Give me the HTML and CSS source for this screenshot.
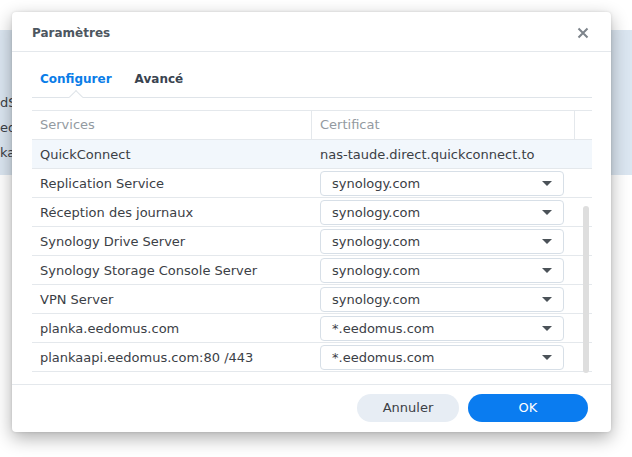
FILE: index.html
```html
<!DOCTYPE html>
<html lang="fr">
<head>
<meta charset="utf-8">
<title>Paramètres</title>
<link rel="stylesheet" href="styles.css">
</head>
<body>
<div class="desktop">
  <div class="backdrop">
    <div class="bd-top"></div>
    <div class="bd-band">
      <div class="bd-rows">
        <div class="bd-row">dS</div>
        <div class="bd-row">ed</div>
        <div class="bd-row">ka</div>
      </div>
    </div>
  </div>

  <div class="dialog">
    <div class="dlg-header">
      <span class="dlg-title">Paramètres</span>
      <span class="dlg-close" aria-label="Fermer">
        <svg width="12" height="12" viewBox="0 0 12 12"><path d="M1.5 1.5L10.5 10.5M10.5 1.5L1.5 10.5" stroke="#7d848b" stroke-width="2" stroke-linecap="butt"/></svg>
      </span>
    </div>
    <div class="dlg-body">
      <div class="tabs">
        <span class="tab active">Configurer</span>
        <span class="tab">Avancé</span>
      </div>
      <div class="table">
        <div class="thead">
          <div class="th th-svc">Services</div>
          <div class="th th-cert">Certificat</div>
          <div class="th th-pad"></div>
        </div>
        <div class="tbody">
          <div class="row selected"><div class="td">QuickConnect</div><div class="td cert-text">nas-taude.direct.quickconnect.to</div></div>
          <div class="row"><div class="td">Replication Service</div><div class="td"><div class="select">synology.com<i class="caret"></i></div></div></div>
          <div class="row"><div class="td">Réception des journaux</div><div class="td"><div class="select">synology.com<i class="caret"></i></div></div></div>
          <div class="row"><div class="td">Synology Drive Server</div><div class="td"><div class="select">synology.com<i class="caret"></i></div></div></div>
          <div class="row"><div class="td">Synology Storage Console Server</div><div class="td"><div class="select">synology.com<i class="caret"></i></div></div></div>
          <div class="row"><div class="td">VPN Server</div><div class="td"><div class="select">synology.com<i class="caret"></i></div></div></div>
          <div class="row"><div class="td">planka.eedomus.com</div><div class="td"><div class="select">*.eedomus.com<i class="caret"></i></div></div></div>
          <div class="row"><div class="td">plankaapi.eedomus.com:80 /443</div><div class="td"><div class="select">*.eedomus.com<i class="caret"></i></div></div></div>
          <div class="scroll-thumb"></div>
        </div>
      </div>
    </div>
    <div class="dlg-footer">
      <button class="btn btn-cancel">Annuler</button>
      <button class="btn btn-ok">OK</button>
    </div>
  </div>
</div>
</body>
</html>
```
FILE: styles.css
```css
* { box-sizing: border-box; }
html, body { margin: 0; padding: 0; }
body {
  width: 632px;
  height: 457px;
  overflow: hidden;
  background: #ffffff;
  font-family: "DejaVu Sans", Verdana, sans-serif;
  font-size: 13px;
  color: #3b4046;
}
.desktop {
  position: relative;
  width: 632px;
  height: 457px;
}
.backdrop {
  display: flex;
  flex-direction: column;
}
.bd-top { height: 30px; background: #ffffff; }
.bd-band {
  height: 145px;
  background: #dbe6f1;
}
.bd-rows {
  padding-top: 60px;
  display: flex;
  flex-direction: column;
}
.bd-row {
  height: 25px;
  line-height: 25px;
  color: #3b4046;
}

.dialog {
  position: absolute;
  left: 12px;
  top: 12px;
  width: 599px;
  height: 420px;
  background: #ffffff;
  border-radius: 4px;
  box-shadow: 0 6px 18px rgba(0, 0, 0, 0.32), 0 0 3px rgba(0,0,0,0.12);
  display: flex;
  flex-direction: column;
}
.dlg-header {
  height: 40px;
  border-bottom: 1px solid #e4e8ec;
  display: flex;
  align-items: center;
  justify-content: space-between;
  padding: 2px 22px 0 20px;
}
.dlg-title {
  font-weight: bold;
  font-size: 12px;
  color: #4d5660;
}
.dlg-close { display: flex; }

.dlg-body {
  flex: 1;
  padding: 0 19px 0 20px;
  display: flex;
  flex-direction: column;
}
.tabs {
  height: 46px;
  border-bottom: 1px solid #dfe4e9;
  display: flex;
  align-items: flex-end;
  padding-left: 8px;
  gap: 23px;
}
.tab {
  font-weight: bold;
  font-size: 12px;
  color: #3a4450;
  position: relative;
  height: 45px;
  line-height: 54px;
}
.tab.active { color: #0a7de8; }
.tab.active::after {
  content: "";
  position: absolute;
  left: 50%;
  bottom: -5px;
  width: 9px;
  height: 9px;
  margin-left: -5px;
  background: #fff;
  border-left: 1px solid #dfe4e9;
  border-top: 1px solid #dfe4e9;
  transform: rotate(45deg);
}
.table {
  margin-top: 12px;
  border-top: 1px solid #e4e8ec;
}
.thead {
  display: flex;
  height: 29px;
  border-bottom: 1px solid #e4e8ec;
}
.th {
  color: #939aa1;
  line-height: 28px;
  padding-left: 8px;
}
.th-svc { width: 280px; border-right: 1px solid #e4e8ec; }
.th-cert { width: 263px; border-right: 1px solid #e4e8ec; }
.th-pad { flex: 1; }
.tbody {
  position: relative;
  display: flex;
  flex-direction: column;
}
.row {
  display: flex;
  height: 29px;
  border-bottom: 1px solid #e4e8ec;
  align-items: center;
}
.row.selected { background: #f2f7fc; }
.row .td:first-child { width: 280px; padding-left: 8px; }
.row .td:last-child { width: 263px; padding-left: 8px; }
.cert-text { color: #3b4046; }
.select {
  width: 244px;
  height: 25px;
  border: 1px solid #d7dfe7;
  border-radius: 4px;
  display: flex;
  align-items: center;
  justify-content: space-between;
  padding: 0 11px 0 11px;
  background: #fff;
}
.caret {
  width: 0;
  height: 0;
  border-left: 5px solid transparent;
  border-right: 5px solid transparent;
  border-top: 5px solid #4b5258;
  margin-top: 1px;
}
.scroll-thumb {
  position: absolute;
  left: 551px;
  top: 66px;
  width: 6px;
  height: 167px;
  background: #dedede;
  border-radius: 3px;
}

.dlg-footer {
  height: 48px;
  border-top: 1px solid #e4e8ec;
  display: flex;
  justify-content: flex-end;
  align-items: center;
  gap: 9px;
  padding: 0 23px 2px 0;
}
.btn {
  font-family: "DejaVu Sans", Verdana, sans-serif;
  font-size: 13px;
  height: 28px;
  border: none;
  border-radius: 14px;
  cursor: pointer;
}
.btn-cancel {
  width: 102px;
  background: #e7edf4;
  color: #3b4046;
}
.btn-ok {
  width: 120px;
  background: #0a7cf0;
  color: #ffffff;
}
```
